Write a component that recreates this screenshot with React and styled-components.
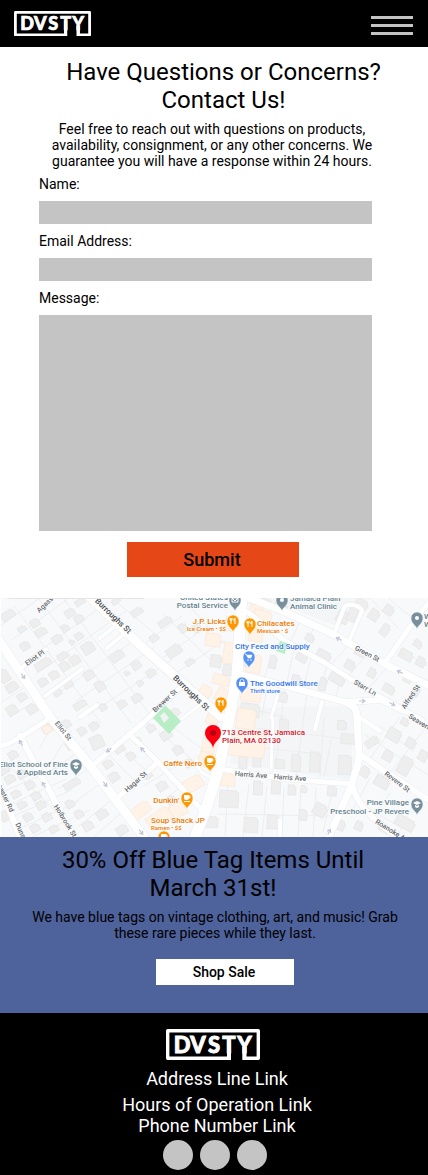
import React from "react";
import styled, { createGlobalStyle } from "styled-components";

const GlobalStyle = createGlobalStyle`
  *, *::before, *::after { box-sizing: border-box; }
  body { margin: 0; background: #000; font-family: Roboto, Arial, sans-serif; color: #000; }
  h1, h2, p { margin: 0; }
`;

const Page = styled.div`
  background: #fff;
`;

const Header = styled.header`
  display: flex;
  align-items: center;
  justify-content: space-between;
  height: 47px;
  padding: 0 15px 0 14px;
  background: #000;
`;

const LogoLink = styled.a`
  display: block;
  width: ${(p) => p.$width}px;
`;

const LogoSvg = styled.svg`
  display: block;
  width: 100%;
  height: auto;
`;

const MenuButton = styled.button`
  display: flex;
  flex-direction: column;
  gap: 5px;
  width: 42px;
  margin-top: 4px;
  padding: 0;
  border: 0;
  background: none;
  cursor: pointer;
`;

const MenuBar = styled.span`
  height: 3px;
  background: #c4c4c4;
`;

const Title = styled.h1`
  padding: ${(p) => p.$inset};
  font-size: 24px;
  line-height: 28px;
  font-weight: 400;
  text-align: center;
`;

const Copy = styled.p`
  padding: ${(p) => p.$inset};
  font-size: 14px;
  line-height: 16px;
  text-align: center;
`;

const Contact = styled.section`
  display: flex;
  flex-direction: column;
  gap: 7px;
  padding: 11px 0 21px;
`;

const Form = styled.form`
  display: flex;
  flex-direction: column;
  gap: 9px;
  padding: 0 56px 0 39px;
`;

const Field = styled.div`
  display: flex;
  flex-direction: column;
  gap: 9px;
`;

const Label = styled.label`
  font-size: 14px;
  line-height: 16px;
`;

const Input = styled.input`
  width: 100%;
  height: 23px;
  padding: 0 6px;
  border: 0;
  border-radius: 0;
  background: #c4c4c4;
  font: 14px Roboto, sans-serif;
`;

const TextArea = styled.textarea`
  width: 100%;
  height: 216px;
  padding: 6px;
  border: 0;
  border-radius: 0;
  background: #c4c4c4;
  font: 14px Roboto, sans-serif;
  resize: none;
`;

const Actions = styled.div`
  display: flex;
  justify-content: center;
  padding: 2px 0 0 15px;
`;

const Button = styled.button`
  padding: 0 2px 0 0;
  border: 0;
  color: #000;
  cursor: pointer;
`;

const SubmitButton = styled(Button)`
  width: 172px;
  height: 35px;
  background: #e64717;
  font: 500 18px/21px Roboto, sans-serif;
`;

const ShopButton = styled(Button)`
  width: 138px;
  height: 26px;
  background: #fff;
  font: 500 14px/16px Roboto, sans-serif;
`;

const MapFrame = styled.section`
  padding-left: 1px;
  background: #fff;
`;

const MapSvg = styled.svg`
  display: block;
  width: 100%;
  height: 239px;
  background: #f8f9fb;
`;

const Promo = styled.section`
  display: flex;
  flex-direction: column;
  gap: 7px;
  padding: 9px 0 28px;
  background: #4e629c;
`;

const PromoAction = styled.div`
  display: flex;
  justify-content: center;
  padding: 11px 0 0 22px;
`;

const Footer = styled.footer`
  display: flex;
  flex-direction: column;
  align-items: center;
  padding: 16px 2px 5px 0;
  background: #000;
`;

const FooterLinks = styled.nav`
  display: flex;
  flex-direction: column;
  align-items: center;
  padding: 8px 0 4px 8px;
`;

const FooterLink = styled.a`
  margin-bottom: ${(p) => (p.$spaced ? 5 : 0)}px;
  color: #fff;
  font-size: 18px;
  line-height: 21px;
  text-decoration: none;
`;

const SocialLinks = styled.div`
  display: flex;
  gap: 7px;
  padding-left: 4px;
`;

const SocialLink = styled.a`
  width: 30px;
  height: 30px;
  border-radius: 50%;
  background: #c4c4c4;
`;

function Logo({ width }) {
  return (
    <LogoLink href="#home" $width={width} aria-label="DVSTY home">
      <LogoSvg viewBox="0 0 94 31">
        <path
          d="M63 29.3H1.7V1.7h90.6v27.6H78.3"
          fill="none"
          stroke="#fff"
          strokeWidth="3.4"
          strokeLinejoin="round"
        />
        <path d="M61 12h4v19h-4zM76.3 18h4.2v13h-4.2z" fill="#fff" />
        <g
          fill="#fff"
          stroke="#fff"
          strokeWidth=".9"
          fontFamily="Lato, sans-serif"
          fontWeight="900"
          fontSize="22"
          textAnchor="middle"
        >
          <text x="16" y="23.5">D</text>
          <text x="32" y="23.5">V</text>
          <text x="48" y="23.5">S</text>
          <text x="63" y="23.5">T</text>
          <text x="78.4" y="23.5">Y</text>
        </g>
      </LogoSvg>
    </LogoLink>
  );
}

const BUILDINGS = [
  [8, 17, 14, 8, -33], [22, 31, 8, 6, -33], [35, 25, 9, 8, -33], [41, 34, 11, 8, -33], [57, 41, 10, 8, -33],
  [25, 48, 9, 8, -33], [65, 30, 7, 7, -33], [70, 15, 10, 8, -33], [79, 21, 9, 8, -33], [80, 4, 10, 6, -33],
  [79, 38, 8, 7, -33], [72, 44, 5, 5, -33], [88, 50, 12, 11, -33], [63, 58, 11, 7, -33], [75, 62, 10, 9, -33],
  [65, 68, 9, 9, -33], [43, 66, 17, 8, -33], [54, 77, 9, 8, -33], [43, 84, 9, 8, -33], [68, 86, 9, 8, -33],
  [57, 94, 8, 8, -33], [4, 78, 10, 13, -33], [12, 89, 12, 9, -33], [22, 99, 9, 8, -33], [12, 112, 10, 10, -33],
  [32, 111, 10, 9, -33], [89, 77, 10, 9, -33], [100, 88, 9, 10, -33], [117, 58, 14, 9, -35], [136, 67, 9, 9, -35],
  [127, 75, 5, 5, -35], [140, 85, 6, 6, -35], [122, 106, 9, 8, -35], [80, 107, 13, 7, -33], [103, 109, 7, 7, -33],
  [137, 14, 12, 7, -35], [116, 3, 9, 5, -35], [165, 24, 14, 7, -34], [154, 40, 8, 7, -34], [174, 53, 15, 10, -34],
  [190, 64, 9, 6, -34], [183, 30, 8, 9, -34], [197, 30, 8, 8, -34], [151, 75, 9, 8, -34], [137, 100, 10, 8, -34],
  [216, 63, 11, 12, 8], [228, 72, 10, 11, 8], [174, 115, 11, 8, -34], [250, 63, 11, 13, 10], [273, 64, 7, 13, 10],
  [262, 3, 21, 7, 22], [281, 8, 13, 8, 22], [250, 112, 19, 13, 8], [282, 99, 11, 10, 12], [296, 82, 9, 10, 14],
  [302, 59, 11, 9, 30], [324, 57, 15, 8, 30], [350, 67, 10, 9, 30], [343, 19, 12, 12, 28], [353, 16, 9, 15, 28],
  [310, 40, 9, 7, 28], [337, 81, 16, 9, 30], [360, 54, 10, 8, 30], [372, 75, 8, 9, 30], [323, 86, 7, 13, 14],
  [374, 17, 10, 11, 35], [385, 32, 8, 12, 35], [389, 12, 10, 9, 35], [406, 57, 14, 9, 30], [421, 64, 9, 9, 30],
  [408, 80, 8, 9, 30], [389, 91, 12, 8, 30], [416, 93, 7, 11, 30], [362, 6, 13, 8, 35], [418, 46, 9, 7, 35],
  [47, 130, 10, 9, -30], [66, 126, 9, 8, -30], [82, 133, 8, 8, -34], [94, 128, 9, 8, -34], [97, 144, 13, 13, -25],
  [70, 147, 8, 8, -34], [119, 150, 10, 9, -34], [131, 158, 8, 8, -34], [108, 166, 9, 8, -34], [114, 179, 10, 9, -34],
  [137, 142, 7, 7, -34], [72, 186, 17, 7, -30], [13, 157, 9, 8, -30], [4, 172, 10, 8, -30], [10, 181, 10, 8, -30],
  [22, 176, 9, 8, -30], [30, 187, 9, 8, -30], [16, 196, 9, 7, -30], [36, 198, 9, 8, -30], [22, 207, 9, 7, -30],
  [41, 207, 9, 8, -30], [28, 219, 9, 8, -30], [47, 219, 9, 8, -30], [35, 230, 9, 8, -30], [54, 231, 9, 7, -30],
  [70, 206, 8, 8, -30], [79, 216, 8, 8, -30], [88, 228, 10, 9, -30], [5, 218, 9, 10, -30], [102, 216, 11, 9, -34],
  [122, 232, 11, 9, -34], [151, 130, 8, 8, -34], [166, 137, 11, 9, -34], [178, 152, 9, 9, -34], [189, 165, 8, 8, -34],
  [162, 188, 10, 9, -34], [148, 177, 8, 7, -34], [171, 202, 9, 8, -34], [243, 164, 8, 13, 2], [257, 163, 8, 12, 2],
  [229, 201, 19, 17, 3], [211, 224, 14, 11, 3], [251, 227, 14, 15, 3], [273, 224, 12, 14, 3], [258, 190, 9, 14, 3],
  [276, 189, 9, 14, 3], [280, 166, 10, 9, 3], [284, 127, 9, 12, 3], [296, 165, 9, 17, 3], [315, 164, 10, 20, 3],
  [345, 167, 13, 19, 3], [348, 141, 14, 10, 3], [342, 127, 9, 9, 3], [292, 192, 8, 10, 3], [304, 191, 6, 7, 3],
  [332, 193, 9, 10, 3], [303, 217, 8, 11, 3], [320, 212, 13, 12, 30], [340, 227, 10, 10, 25], [365, 174, 9, 10, 30],
  [382, 184, 15, 11, 30], [372, 144, 14, 8, -35], [388, 158, 10, 10, 30], [405, 168, 12, 18, 30], [394, 137, 14, 12, 30],
  [411, 145, 10, 9, 30], [423, 158, 9, 10, 30], [405, 124, 8, 7, 30], [405, 225, 20, 11, 30], [384, 231, 12, 6, 30],
  [359, 228, 8, 9, 25],
];

const SHOPS = [
  [213, 42, 15, 13, 8], [229, 55, 11, 21, 8], [230, 26, 9, 14, 8], [221, 82, 17, 10, 15], [222, 97, 12, 14, 30],
  [206, 93, 12, 10, 30], [256, 14, 13, 14, 8], [262, 21, 18, 17, 14], [256, 35, 14, 17, 8], [254, 66, 14, 18, 8],
  [251, 97, 20, 13, 8], [246, 121, 19, 20, 8], [207, 162, 17, 15, 20], [213, 120, 12, 14, 20],
  [209, 146, 13, 17, 10], [246, 146, 38, 25, 6], [228, 182, 14, 12, 3], [47, 131, 8, 8, -30],
  [141, 212, 19, 12, -36], [159, 220, 25, 14, -36], [178, 212, 15, 14, -30], [193, 186, 20, 13, -30],
];

const LOTS =
  "M0 28 40 0M12 42 69 0M28 61 108 4M36 76 126 13M61 93 139 39M76 103 155 49M88 117 172 62M14 8 101 125M38 0 131 125M63 0 154 122M0 105 27 88M9 119 39 101M144 46 182 18M158 63 208 28M173 77 225 42M162 15 225 76M182 0 235 58M112 0 160 40M255 56 248 75M270 62 263 84M295 46 286 89M312 55 303 92M328 64 319 97M343 74 335 101M302 18 291 43M316 25 303 52M352 43 330 68M370 53 345 82M387 70 363 96M370 0 399 31M388 0 412 20M402 52 427 68M239 108 285 119M268 83 262 118M285 88 276 165M307 94 296 178M324 119 320 180M256 130 355 142M237 147 310 155M331 142 324 180M3 163 72 229M0 195 60 169M9 207 66 181M14 218 72 192M21 230 79 203M32 239 90 212M58 119 39 151M72 132 50 166M86 149 46 176M99 164 58 191M108 180 65 211M120 195 79 228M129 208 94 239M103 151 137 185M113 143 148 174M124 134 160 166M147 124 201 169M159 119 208 155M145 187 172 171M161 204 189 183M228 185 225 239M249 186 243 239M267 188 262 239M284 189 282 239M301 190 298 239M316 190 313 239M333 190 323 234M218 216 330 218M365 137 428 177M380 128 414 154M369 162 400 119M390 175 426 129M370 180 353 211M390 195 374 218M358 205 406 232M413 207 399 235";

const ROADS = [
  ["M88 -3 143 50 221 119", 9],
  ["M-2 41 50 119 92 170 146 242", 9],
  ["M242 -3 237 78 229 121 219 169 206 211 194 242", 11],
  ["M246 -1 285 14 335 37 385 66 430 88", 7],
  ["M246 13 285 43 325 65 378 98 422 122", 5],
  ["M239 76 286 88 345 104 382 102 402 112", 6],
  ["M345 104C355 107 357 113 357 119L359 156C359 169 352 181 352 186L328 241", 7],
  ["M352 186C356 207 374 223 402 242", 6],
  ["M359 156 430 203", 6],
  ["M220 171 286 181 352 186", 5],
  ["M-2 149C14 145 22 138 52 119", 5],
  ["M20 138 76 242", 6],
  ["M-2 182 21 242", 6],
  ["M92 168 143 125 182 88", 5],
  ["M129 136 153 159 201 211", 5],
  ["M117 200 143 178 157 165", 5],
  ["M45 98 82 71", 4],
  ["M20 71 46 51", 4],
  ["M100 40 118 26M107 50 124 36", 4],
  ["M80 119 97 107", 4],
  ["M179 123 200 107", 3],
  ["M334 36 344 10C347 4 360 7 362 13L349 43", 4],
  ["M384 66 412 26 430 3", 5],
  ["M359 119 380 133", 4],
  ["M315 131 322 104", 4],
  ["M196 160C196 171 203 178 216 180", 3],
  ["M280 222V240", 4],
  ["M271 120 279 92", 3],
  ["M271 173 273 120", 3],
];

const COLORS = {
  food: "#ff9800",
  place: "#78909c",
  store: "#5491f5",
};

const PINS = [
  [233, 25, "food", "fork"], [250, 28, "food", "fork"], [221, 107, "food", "fork"],
  [210, 165, "food", "cup"], [187, 202, "food", "cup"], [164, 241, "food", "cup"],
  [235, 4, "place", "box"], [282, 4, "place", "dot"], [417, 22, "place", "dot"],
  [76, 169, "place", "cap"], [417, 208, "place", "cap"],
  [249, 61, "store", "cart"], [242, 87, "store", "bag"],
];

const GLYPHS = {
  fork: <path d="M-2-3v6M-3-3v2h2v-2M2 3v-6q-2 1-1 3h1" fill="none" stroke="#fff" />,
  cup: (
    <g>
      <path d="M-3-3h5v3q0 2-2 2h-1q-2 0-2-2zM-3 3h6v1h-6z" fill="#fff" />
      <path d="M2-2h1v2h-1" fill="none" stroke="#fff" />
    </g>
  ),
  cap: <path d="M-4-1 0-3 4-1 0 1zM-2 1 0 2 2 1v2L0 4l-2-1z" fill="#fff" />,
  cart: (
    <g>
      <path d="M-4-3h1l2 4h3l1-3h-5z" fill="#fff" stroke="#fff" strokeWidth=".5" />
      <circle cx="-1" cy="3" r=".8" fill="#fff" />
      <circle cx="2" cy="3" r=".8" fill="#fff" />
    </g>
  ),
  bag: (
    <g>
      <path d="M-3-1h6v4h-6z" fill="#fff" />
      <path d="M-2-1q0-3 2-3t2 3" fill="none" stroke="#fff" strokeWidth=".8" />
    </g>
  ),
  box: <path d="M-3-2h6v4h-6zM-3-2 0 1 3-2" fill="none" stroke="#fff" />,
  dot: <circle r="2" fill="#fff" />,
};

const PLACE_LABELS = [
  ["United States", 228, 2, 8, "place", "end"],
  ["Postal Service", 228, 10, 8, "place", "end"],
  ["Jamaica Plain", 290, 3, 8, "place", "start"],
  ["Animal Clinic", 290, 11, 8, "place", "start"],
  ["J.P. Licks", 226, 26, 8, "food", "end"],
  ["Ice Cream • $$", 226, 33, 6, "food", "end"],
  ["Chilacates", 257, 28, 8, "food", "start"],
  ["Mexican • $", 257, 35, 6, "food", "start"],
  ["City Feed and Supply", 235, 51, 8, "store", "start"],
  ["The Goodwill Store", 250, 88, 8, "store", "start"],
  ["Thrift store", 250, 95, 6, "store", "start"],
  ["Eliot School of Fine", 68, 169, 8, "place", "end"],
  ["& Applied Arts", 68, 177, 8, "place", "end"],
  ["Caffè Nero", 202, 168, 8, "food", "end"],
  ["Dunkin'", 179, 205, 8, "food", "end"],
  ["Soup Shack JP", 151, 225, 8, "food", "start"],
  ["Ramen • $$", 151, 232, 6, "food", "start"],
  ["Pine Village", 409, 207, 8, "place", "end"],
  ["Preschool - JP Revere", 409, 216, 8, "place", "end"],
  ["713 Centre St, Jamaica", 222, 137, 8, "address", "start"],
  ["Plain, MA 02130", 222, 145, 8, "address", "start"],
  ["W", 424, 21, 8, "place", "start"],
  ["W", 424, 29, 8, "place", "start"],
];

const LABEL_COLORS = {
  place: "#5f7f8c",
  food: "#ea7a00",
  store: "#2f72ea",
  address: "#d0142a",
};

const STREET_LABELS = [
  ["Burroughs St", 113, 18, 44, 8], ["Burroughs St", 191, 95, 44, 8], ["Agassiz", 47, 5, -43, 7],
  ["Eliot Pl", 35, 60, -35, 7], ["Eliot St", 63, 133, 52, 7], ["Brewer St", 165, 103, -43, 7],
  ["Green St", 367, 56, 28, 7], ["Starr Ln", 365, 90, 30, 7], ["Alfred St", 411, 99, -56, 7],
  ["Seaverns Ave", 427, 129, 32, 7], ["Hagar St", 136, 184, -42, 7], ["Lancaster Rd", 3, 195, 65, 7],
  ["Dunster Rd", 24, 241, 66, 7], ["Holbrook St", 65, 223, 58, 7], ["Harris Ave", 251, 177, 4, 7],
  ["Harris Ave", 290, 180, 4, 7], ["Revere St", 397, 184, 37, 7], ["Roanoke Ave", 393, 234, 32, 7],
];

const ARROWS = [
  [339, 41, 207], [400, 74, 207], [362, 103, 0], [392, 106, 28], [23, 78, 55], [21, 145, 240],
  [44, 187, 240], [109, 152, 142], [143, 152, 225], [105, 186, 54], [329, 234, -65], [141, 234, 54],
];

function Block({ box, fill, stroke }) {
  const [x, y, w, h, angle] = box;
  return (
    <path
      d={`M${-w / 2} ${-h / 2}H${w / 2 - 2}v2h2V${h / 2}H${-w / 2}z`}
      transform={`translate(${x} ${y}) rotate(${angle})`}
      fill={fill}
      stroke={stroke}
      strokeWidth=".6"
    />
  );
}

function StoreMap() {
  return (
    <MapFrame aria-label="Store location">
      <MapSvg viewBox="1 0 427 239" preserveAspectRatio="xMidYMid slice">
        <rect width="428" height="239" fill="#f8f9fb" />
        <path d="M246 0H370L340 29 285 8zM238 110 230 165 350 182 356 108z" fill="#f1f2f4" fillOpacity=".6" />
        <path d={LOTS} fill="none" stroke="#e9ebed" strokeWidth=".8" />
        {BUILDINGS.map((box, i) => (
          <Block key={i} box={box} fill="#eeeeee" stroke="#e3e3e3" />
        ))}
        {SHOPS.map((box, i) => (
          <Block key={i} box={box} fill="#fff2e6" stroke="#fae6d5" />
        ))}
        <g fill="none" strokeLinecap="round" strokeLinejoin="round">
          {ROADS.map(([d, width], i) => (
            <path key={i} d={d} stroke="#e9ebee" strokeWidth={width + 1} />
          ))}
          {ROADS.map(([d, width], i) => (
            <path key={i} d={d} stroke="#fff" strokeWidth={width} />
          ))}
        </g>
        <path d="M153 120 165 107 181 123 169 136zM280 43l7 2-2 11-9-3z" fill="#b9edc5" />
        <path d="M160 118 164 114 169 120 164 125z" fill="#f1f2f3" />
        {ARROWS.map(([x, y, angle], i) => (
          <path
            key={i}
            d="M-3 0H2M0-2 3 0 0 2"
            transform={`translate(${x} ${y}) rotate(${angle})`}
            fill="none"
            stroke="#c3c6da"
            strokeWidth="1.2"
          />
        ))}
        <g
          fontFamily="Roboto, sans-serif"
          fontWeight="500"
          stroke="#fff"
          strokeWidth="1"
          paintOrder="stroke"
          strokeLinejoin="round"
        >
          {STREET_LABELS.map(([text, x, y, angle, size], i) => (
            <text
              key={i}
              transform={`translate(${x} ${y}) rotate(${angle})`}
              fontSize={size}
              textAnchor="middle"
              dominantBaseline="central"
              fill={size > 7 ? "#43484d" : "#64696e"}
            >
              {text}
            </text>
          ))}
          {PLACE_LABELS.map(([text, x, y, size, kind, anchor], i) => (
            <text key={i} x={x} y={y} fontSize={size} textAnchor={anchor} fill={LABEL_COLORS[kind]}>
              {text}
            </text>
          ))}
        </g>
        {PINS.map(([x, y, kind, glyph], i) => (
          <g key={i} transform={`translate(${x} ${y})`}>
            <path
              d="M0 9C-1 5-6 4-6-2A6 6 0 0 1 6-2C6 4 1 5 0 9z"
              fill={COLORS[kind]}
              stroke="#fff"
              strokeWidth=".5"
            />
            <g transform="translate(0 -2)">{GLYPHS[glyph]}</g>
          </g>
        ))}
        <path d="M213 150C212 143 205 142 205 135A8 8 0 0 1 221 135C221 142 214 143 213 150z" fill="#fb0012" />
        <circle cx="213" cy="135" r="3" fill="#b00012" />
        <path d="M4 0H144V1H10z" fill="#e4e5e7" />
      </MapSvg>
    </MapFrame>
  );
}

export default function App() {
  return (
    <Page>
      <GlobalStyle />
      <Header>
        <Logo width={77} />
        <MenuButton type="button" aria-label="Open menu">
          <MenuBar />
          <MenuBar />
          <MenuBar />
        </MenuButton>
      </Header>
      <main>
        <Contact>
          <Title $inset="0 24px 0 43px">Have Questions or Concerns? Contact Us!</Title>
          <Copy $inset="0 46px 0 42px">
            Feel free to reach out with questions on products, availability, consignment, or any other
            concerns. We guarantee you will have a response within 24 hours.
          </Copy>
          <Form onSubmit={(e) => e.preventDefault()}>
            <Field>
              <Label htmlFor="name">Name:</Label>
              <Input id="name" name="name" type="text" />
            </Field>
            <Field>
              <Label htmlFor="email">Email Address:</Label>
              <Input id="email" name="email" type="email" />
            </Field>
            <Field>
              <Label htmlFor="message">Message:</Label>
              <TextArea id="message" name="message" />
            </Field>
            <Actions>
              <SubmitButton type="submit">Submit</SubmitButton>
            </Actions>
          </Form>
        </Contact>
        <StoreMap />
        <Promo>
          <Title as="h2" $inset="0 41px 0 39px">30% Off Blue Tag Items Until March 31st!</Title>
          <Copy $inset="0 27px 0 29px">
            We have blue tags on vintage clothing, art, and music! Grab these rare pieces while they last.
          </Copy>
          <PromoAction>
            <ShopButton type="button">Shop Sale</ShopButton>
          </PromoAction>
        </Promo>
      </main>
      <Footer>
        <Logo width={94} />
        <FooterLinks aria-label="Store information">
          <FooterLink href="#address" $spaced>Address Line Link</FooterLink>
          <FooterLink href="#hours">Hours of Operation Link</FooterLink>
          <FooterLink href="#phone">Phone Number Link</FooterLink>
        </FooterLinks>
        <SocialLinks>
          <SocialLink href="#facebook" aria-label="Facebook" />
          <SocialLink href="#instagram" aria-label="Instagram" />
          <SocialLink href="#twitter" aria-label="Twitter" />
        </SocialLinks>
      </Footer>
    </Page>
  );
}
